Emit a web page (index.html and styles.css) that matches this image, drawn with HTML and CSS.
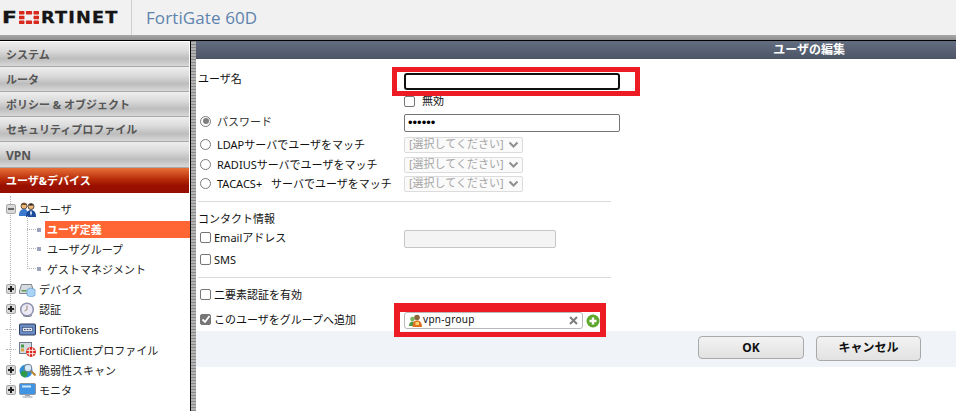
FILE: index.html
```html
<!DOCTYPE html>
<html lang="ja">
<head>
<meta charset="utf-8">
<title>FortiGate 60D</title>
<link rel="stylesheet" href="styles.css">
</head>
<body>
<header class="topbar">
  <div class="logo">
    <span class="logo-f">F</span>
    <svg class="logo-mark" width="20" height="13" viewBox="0 0 22 16" preserveAspectRatio="none"><g fill="#d8291c"><rect x="0" y="0" width="6" height="4.4" rx=".6"/><rect x="7.600" y="0" width="6.800" height="4.400" rx=".6"/><rect x="16" y="0" width="6" height="4.400" rx=".6"/><rect x="0" y="5.800" width="6" height="4.400" rx=".6"/><rect x="16" y="5.800" width="6" height="4.400" rx=".6"/><rect x="0" y="11.600" width="6" height="4.400" rx=".6"/><rect x="7.600" y="11.600" width="6.800" height="4.400" rx=".6"/><rect x="16" y="11.600" width="6" height="4.400" rx=".6"/></g></svg>
    <span class="logo-rest">RTINET</span>
  </div>
  <div class="model">FortiGate 60D</div>
</header>
<div class="band"></div>
<div class="shell">
  <nav class="side">
    <div class="acc">システム</div>
    <div class="acc">ルータ</div>
    <div class="acc">ポリシー &amp; オブジェクト</div>
    <div class="acc">セキュリティプロファイル</div>
    <div class="acc acc-vpn">VPN</div>
    <div class="acc acc-on">ユーザ&amp;デバイス</div>
    <div class="tree">
      <div class="row r-user">
        <span class="exp minus"></span>
        <svg class="ico" width="17" height="15" viewBox="0 0 17 15"><circle cx="5" cy="4" r="3" fill="#f0b878" stroke="#4a3a28" stroke-width=".8"/><circle cx="12" cy="4.500" r="3" fill="#f0b878" stroke="#2b2b2b" stroke-width=".8"/><path d="M2.500 3c1-2 4-2 5 0z" fill="#6b4a22"/><path d="M9.500 3.500c1-2 4-2 5 0z" fill="#222"/><path d="M0 14c0-5 2-7 5-7s4 2 4 7z" fill="#3b79cf"/><path d="M7 15c0-5 2-7 5-7s5 2 5 7z" fill="#1c4a9a"/><path d="M12 8l-1 3 1 3 1-3z" fill="#e8eef8"/></svg>
        <span>ユーザ</span>
      </div>
      <div class="sub sub-on"><i class="dot"></i><span class="sub-label">ユーザ定義</span></div>
      <div class="sub"><i class="dot"></i><span class="sub-label">ユーザグループ</span></div>
      <div class="sub"><i class="dot"></i><span class="sub-label">ゲストマネジメント</span></div>
      <div class="row">
        <span class="exp"></span>
        <svg class="ico" width="17" height="15" viewBox="0 0 17 15"><path d="M0.500 9l2-6.500h10l2 6.500v2.500h-14z" fill="#d8dbdf" stroke="#7d848c"/><rect x="2.500" y="8" width="5" height="1.500" fill="#5c9a4c"/><path d="M8 7.500l3.500-1.500 4.500 1.500v6l-4 1.500-4-1.500z" fill="#a9d4f5" stroke="#5f9bd0" stroke-width=".7"/></svg>
        <span>デバイス</span>
      </div>
      <div class="row">
        <span class="exp"></span>
        <svg class="ico" width="17" height="15" viewBox="0 0 17 15"><circle cx="8" cy="7.500" r="6.300" fill="#eceaf6" stroke="#9095ad" stroke-width="1.600"/><path d="M8 3.500v4l-2.500 1.500" fill="none" stroke="#8a7a55" stroke-width=".9"/><path d="M4 13.500c3 1.500 6 1.500 9 0" fill="none" stroke="#6e7285"/></svg>
        <span>認証</span>
      </div>
      <div class="row">
        <span class="exp none"></span>
        <svg class="ico" width="17" height="15" viewBox="0 0 17 15"><rect x=".5" y="2" width="16" height="11" rx="1" fill="#6a8cc4" stroke="#2d3c5c"/><rect x="3.500" y="5.500" width="10" height="4" fill="#dfe5ee" stroke="#33456a" stroke-width=".6"/><path d="M5 7.500h1.500M7.800 7.500h1.500M10.500 7.500h1.500" stroke="#33456a"/></svg>
        <span>FortiTokens</span>
      </div>
      <div class="row">
        <span class="exp none"></span>
        <svg class="ico" width="17" height="15" viewBox="0 0 17 15"><rect x=".5" y=".5" width="12" height="11" fill="#d5dbe2" stroke="#6f7c8a"/><rect x="2" y="2.500" width="3" height="3" fill="#4d9a4d"/><rect x="2" y="6.500" width="3" height="3" fill="#d9a441"/><circle cx="12" cy="10" r="5" fill="#d6261c"/><path d="M7.500 8.300h9M7.500 11.700h9M10.300 5.500v9M13.700 5.500v9" stroke="#fff" stroke-width=".9"/></svg>
        <span>FortiClientプロファイル</span>
      </div>
      <div class="row">
        <span class="exp"></span>
        <svg class="ico" width="17" height="15" viewBox="0 0 17 15"><circle cx="7" cy="8" r="6.500" fill="#2f8fd6"/><path d="M1.500 11c1-4 4-4 6-2.500 2 1 1 4-1 6-2.500 0-4-1.500-5-3.500z" fill="#2f9a4a"/><circle cx="9" cy="5" r="3.800" fill="#d8ebf7" stroke="#6c7c8a"/><path d="M12 8l4.500 4.500" stroke="#b98435" stroke-width="2"/></svg>
        <span>脆弱性スキャン</span>
      </div>
      <div class="row">
        <span class="exp"></span>
        <svg class="ico" width="17" height="15" viewBox="0 0 17 15"><rect x=".5" y=".5" width="16" height="11" rx="1" fill="#3f94e4" stroke="#8a939e"/><rect x="3" y="2.500" width="9" height="2" fill="#cfe8fb"/><rect x="6" y="11.500" width="5" height="2" fill="#9aa3ad"/><rect x="3.500" y="13" width="10" height="2" fill="#c6ccd3"/></svg>
        <span>モニタ</span>
      </div>
    </div>
  </nav>
  <div class="gutter"></div>
  <main class="main">
    <div class="title">ユーザの編集</div>
    <form class="form">
      <div class="f-row f-name">
        <label class="lab lab-up4">ユーザ名</label>
        <span class="input input-focus"></span>
      </div>
      <div class="f-row f-disable">
        <span class="lab"></span>
        <span class="ctl"><i class="cb"></i><span class="cb-text">無効</span></span>
      </div>
      <div class="f-row f-pass">
        <span class="lab"><i class="radio radio-on"></i><span class="pw-text">パスワード</span></span>
        <span class="input input-pass">••••••</span>
      </div>
      <div class="f-row f-sel">
        <span class="lab"><i class="radio"></i>LDAPサーバでユーザをマッチ</span>
        <span class="select">[選択してください]<svg class="chev" width="11" height="7" viewBox="0 0 11 7"><path d="M1.500 1.500l4 4 4-4" fill="none" stroke="#8f8f8f" stroke-width="2"/></svg></span>
      </div>
      <div class="f-row f-sel">
        <span class="lab"><i class="radio"></i>RADIUSサーバでユーザをマッチ</span>
        <span class="select">[選択してください]<svg class="chev" width="11" height="7" viewBox="0 0 11 7"><path d="M1.500 1.500l4 4 4-4" fill="none" stroke="#8f8f8f" stroke-width="2"/></svg></span>
      </div>
      <div class="f-row f-sel f-sel-last">
        <span class="lab"><i class="radio"></i><span class="tacacs">TACACS+ サーバでユーザをマッチ</span></span>
        <span class="select">[選択してください]<svg class="chev" width="11" height="7" viewBox="0 0 11 7"><path d="M1.500 1.500l4 4 4-4" fill="none" stroke="#8f8f8f" stroke-width="2"/></svg></span>
      </div>
      <hr class="rule rule-1">
      <div class="f-row f-head"><span class="lab">コンタクト情報</span></div>
      <div class="f-row f-email">
        <span class="lab lab-up2"><i class="cb cb-l"></i>Emailアドレス</span>
        <span class="input input-off"></span>
      </div>
      <div class="f-row f-sms"><span class="lab lab-up1"><i class="cb cb-l"></i>SMS</span></div>
      <hr class="rule rule-2">
      <div class="f-row f-two"><span class="lab lab-up1"><i class="cb cb-l"></i>二要素認証を有効</span></div>
      <div class="f-row f-group">
        <span class="lab lab-up1"><i class="cb cb-l cb-on"><svg width="12" height="12" viewBox="0 0 12 12"><path d="M2.500 6.500l2.500 2.500 4.500-6" fill="none" stroke="#fff" stroke-width="1.800"/></svg></i>このユーザをグループへ追加</span>
        <span class="group">
          <svg class="g-ico" width="13" height="13" viewBox="0 0 13 13"><circle cx="3.500" cy="5" r="2.300" fill="#7bb661"/><path d="M0 12c0-3 1.500-4.500 3.500-4.500S6 9 6 12z" fill="#4d9a4d"/><circle cx="8" cy="3.500" r="2.800" fill="#8a6a3c"/><path d="M3.500 13c0-5 2-6.500 4.500-6.500S13 8 13 13z" fill="#e2711d"/><rect x="6.500" y="8" width="3.500" height="3" fill="#f5d76e"/></svg>
          <span class="g-text">vpn-group</span>
          <svg class="g-x" width="9" height="9" viewBox="0 0 9 9"><path d="M1 1l7 7M8 1l-7 7" stroke="#7d7d7d" stroke-width="2"/></svg>
        </span>
        <svg class="g-add" width="14" height="14" viewBox="0 0 14 14"><circle cx="7" cy="7" r="6.500" fill="#5fa82e"/><path d="M7 3.500v7M3.500 7h7" stroke="#fff" stroke-width="2.400"/></svg>
      </div>
      <div class="actions">
        <span class="btn btn-ok">OK</span>
        <span class="btn btn-cancel">キャンセル</span>
      </div>
    </form>
    <i class="mark mark-1"></i>
    <i class="mark mark-2"></i>
  </main>
</div>
</body>
</html>
```
FILE: styles.css
```css
* { box-sizing: border-box; }
html, body { margin: 0; padding: 0; height: 411px; overflow: hidden; background: #fff; }
body { font-family: "Noto Sans", "Noto Sans CJK JP", sans-serif; font-size: 11px; color: #111; }

.topbar { height: 35px; background: #f1f1f1; display: flex; align-items: center; }
.logo { width: 132px; height: 35px; border-right: 1px solid #cfcfcf; display: flex; align-items: center; padding-left: 2px; font-family: "DejaVu Sans", sans-serif; font-weight: 700; font-size: 15px; color: #151515; -webkit-text-stroke: .3px #151515; }
.logo-f { display: block; width: 16px; transform: scaleX(1.45); transform-origin: left center; }
.logo-mark { flex: none; margin: 0 2px 0 1px; }
.logo-rest { display: block; letter-spacing: 1px; transform: scaleX(1.18); transform-origin: left center; }
.model { margin-left: 14px; font-family: "Open Sans", sans-serif; font-size: 17px; color: #5e83ad; letter-spacing: .1px; }

.band { height: 5px; background: linear-gradient(#a8a8a8, #8f8f8f); }
.shell { display: flex; height: 371px; border-top: 1px solid #000; }

.side { width: 190px; flex: none; background: #fff; border-right: 1px solid #000; padding-top: 1px; box-sizing: content-box; }
.acc { height: 25px; width: 189px; padding: 2px 0 0 6px; line-height: 22px; font-weight: 700; font-size: 11px; color: #555; background: linear-gradient(#eeeeee 0, #dcdcdc 35%, #bdbdbd 70%, #d8d8d8 100%); border-bottom: 1px solid #a9a9a9; }
.acc-vpn { height: 26px; font-size: 12px; line-height: 23px; }
.acc-on { height: 25px; color: #fff; background: linear-gradient(#e87038 0, #b82c08 45%, #9a1000 70%, #950f00 100%); border-bottom: 0; }

.tree { position: relative; padding-top: 6px; font-size: 11px; color: #222; }
.tree::before { content: ""; position: absolute; left: 10px; top: 3px; height: 196px; border-left: 1px dotted #b5b5b5; }
.row { position: relative; height: 20.250px; display: flex; align-items: center; padding-left: 6px; }
.row span:last-child { margin-left: 3px; }
.r-user { height: 20px; margin-bottom: 2px; }
.exp { width: 10px; height: 10px; flex: none; border: 1px solid #a8a8a8; border-radius: 2px; background: #d9d9d9; position: relative; margin-right: 3px; z-index: 1; }
.exp::before { content: ""; position: absolute; left: 1px; right: 1px; top: 3px; height: 2px; background: #222; }
.exp::after { content: ""; position: absolute; top: 1px; bottom: 1px; left: 3px; width: 2px; background: #222; }
.exp.minus::before { background: #666; }
.exp.minus::after { display: none; }
.exp.none { background: none; border: 0; border-top: 1px dotted #b5b5b5; height: 1px; border-radius: 0; }
.exp.none::before, .exp.none::after { display: none; }
.ico { flex: none; }

.sub { position: relative; height: 20px; padding-left: 37px; display: flex; align-items: center; }
.sub::before { content: ""; position: absolute; left: 27px; top: 9px; width: 9px; border-top: 1px dotted #b5b5b5; }
.sub::after { content: ""; position: absolute; left: 27px; top: -9px; height: 19px; border-left: 1px dotted #b5b5b5; }
.sub-on { height: 17px; margin-bottom: 1px; }
.sub-on::after { top: -5px; height: 13px; }
.sub-on::before { top: 8px; }
.dot { width: 4px; height: 4px; background: #9aa3bb; margin-right: 4px; flex: none; }
.sub-label { padding-left: 2px; height: 17px; line-height: 17px; flex: 1; }
.sub-on .sub-label { background: #ff6633; color: #fff; font-weight: 700; }

.gutter { width: 5px; flex: none; background: repeating-linear-gradient(#8a8a8a 0 1px, #b3b3b3 1px 3px); }

.main { position: relative; flex: 1; min-width: 0; }
.title { height: 18px; line-height: 18px; text-align: right; padding-right: 111px; background: linear-gradient(#626d80, #4c5565); color: #fff; font-weight: 700; font-size: 12px; }

.form { display: block; }
.f-row { display: flex; align-items: center; padding-left: 4px; }
.lab { width: 204px; flex: none; display: flex; align-items: center; white-space: nowrap; }
.lab-up4 { margin-bottom: 8px; }
.lab-up2 { margin-bottom: 4px; }
.lab-up1 { margin-bottom: 2px; }
.f-name { margin-top: 14px; height: 17px; padding-left: 2px; }
.f-name .lab { width: 206px; }
.f-disable { margin-top: 6px; height: 11px; }
.cb-text { line-height: 11px; }
.f-pass { margin-top: 7px; height: 18px; }
.f-pass .lab { margin-bottom: 4px; }
.f-sel { margin-top: 4px; height: 16px; font-size: 11px; }
.f-sel .lab { margin-bottom: 2px; }
.f-pass + .f-sel { margin-top: 5px; }
.f-sel-last { margin-top: 3px; }
.tacacs { word-spacing: 6px; }
.f-head { margin-top: 8px; height: 16px; padding-left: 2px; }
.f-head .lab { width: 206px; }
.f-email { margin-top: 4px; height: 18px; }
.f-sms { margin-top: 6px; height: 12px; }
.f-two { margin-top: 10px; height: 14px; }
.f-group { margin-top: 10px; height: 17px; }
.f-group .lab-up1 { margin-bottom: 3px; }

.input { display: block; width: 216px; height: 100%; background: #fff; border: 1px solid #767676; border-radius: 2px; }
.input-focus { border: 2px solid #101010; border-radius: 3px; }
.input-pass { line-height: 16px; padding-left: 3px; font-size: 13px; color: #000; font-family: "Liberation Sans", sans-serif; }
.input-off { width: 152px; background: #f4f4f4; border-color: #c6c6c6; }

.radio { width: 11px; height: 11px; flex: none; border: 1px solid #7a7a7a; border-radius: 50%; background: #fff; margin-right: 6px; position: relative; }
.radio-on::after { content: ""; position: absolute; inset: 1.500px; border-radius: 50%; background: #7f7f7f; }
.pw-text { color: #333; }

.cb { display: block; width: 11px; height: 11px; flex: none; border: 1px solid #767676; border-radius: 2px; background: #fff; }
.cb-l { margin-right: 3px; }
.cb-on { background: #767676; border-color: #767676; display: flex; align-items: center; justify-content: center; }
.cb-on svg { flex: none; }
.ctl { display: flex; align-items: center; }
.cb-text { margin-left: 7px; margin-bottom: 2px; }

.select { width: 119px; height: 100%; display: flex; align-items: center; justify-content: space-between; padding: 0 3px 2px 4px; border: 1px solid #dcdcdc; border-radius: 2px; background: #fafafa; color: #a5a5a5; font-size: 11px; line-height: 14px; }
.chev { flex: none; }

.rule { border: 0; border-top: 1px solid #d9d9d9; margin: 0 0 0 2px; width: 413px; height: 1px; }
.rule-1 { margin-top: 9px; }
.rule-2 { margin-top: 11px; }

.group { width: 179px; height: 100%; display: flex; align-items: center; border: 1px solid #b9b9b9; border-radius: 3px; padding: 0 4px 0 4px; background: #fff; }
.g-ico { flex: none; }
.g-text { flex: 1; margin: 0 0 3px 1px; font-size: 10px; letter-spacing: .3px; line-height: 13px; }
.g-add { margin-left: 3px; margin-top: 1px; flex: none; }

.actions { height: 36px; margin-top: 2px; background: #f0f3f8; display: flex; align-items: flex-start; padding: 5px 35px 0 502px; }
.btn { display: block; text-align: center; border: 1px solid #a9a9a9; border-radius: 4px; background: linear-gradient(#f2f2f2, #e2e2e2); font-weight: 700; font-size: 12px; color: #111; }
.btn-ok { width: 106px; height: 23px; line-height: 21px; }
.btn-cancel { width: 105px; height: 25px; line-height: 22px; margin-left: 12px; }

.mark { position: absolute; border: 5px solid #ed1c24; pointer-events: none; }
.mark-1 { left: 196px; top: 26px; width: 248px; height: 29px; }
.mark-2 { left: 198px; top: 262px; width: 212px; height: 34px; border-width: 9px 6px 5px; }
```
